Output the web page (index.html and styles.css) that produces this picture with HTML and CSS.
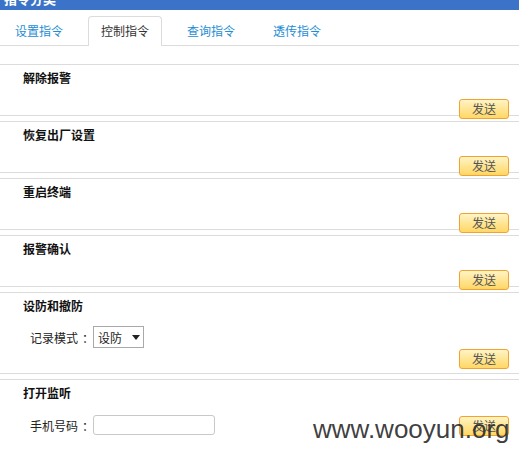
FILE: index.html
```html
<!DOCTYPE html>
<html lang="zh-CN">
<head>
<meta charset="utf-8">
<title>指令分类</title>
<link rel="stylesheet" href="styles.css">
</head>
<body>
<div class="page">
  <div class="topbar"><span class="topbar-title">指令分类</span></div>
  <ul class="tabs">
    <li class="tab">设置指令</li>
    <li class="tab active">控制指令</li>
    <li class="tab">查询指令</li>
    <li class="tab">透传指令</li>
  </ul>
  <div class="sections">
    <div class="section">
      <div class="sec-title">解除报警</div>
      <div class="btn-row"><button class="send">发送</button></div>
    </div>
    <div class="section">
      <div class="sec-title">恢复出厂设置</div>
      <div class="btn-row"><button class="send">发送</button></div>
    </div>
    <div class="section">
      <div class="sec-title">重启终端</div>
      <div class="btn-row"><button class="send">发送</button></div>
    </div>
    <div class="section">
      <div class="sec-title">报警确认</div>
      <div class="btn-row"><button class="send">发送</button></div>
    </div>
    <div class="section">
      <div class="sec-title">设防和撤防</div>
      <div class="form-row">
        <label class="lbl">记录模式<span class="colon">：</span></label>
        <span class="select-wrap">
          <select class="sel"><option>设防</option><option>撤防</option></select>
          <svg class="sel-arrow" width="8" height="5" viewBox="0 0 8 5"><path d="M0 0h8L4 5z" fill="#222"/></svg>
        </span>
      </div>
      <div class="btn-row btn-row-form"><button class="send">发送</button></div>
    </div>
    <div class="section section-last">
      <div class="sec-title">打开监听</div>
      <div class="form-row form-row-input">
        <label class="lbl">手机号码<span class="colon">：</span></label>
        <input class="txt" type="text">
        <button class="send send-inline">发送</button>
      </div>
    </div>
  </div>
  <div class="watermark">www.wooyun.org</div>
</div>
</body>
</html>
```
FILE: styles.css
```css
html, body {
  margin: 0;
  padding: 0;
  background: #fff;
}
body {
  font-family: "Noto Sans CJK SC", "Noto Sans", sans-serif;
  font-size: 12px;
  color: #333;
}
.page {
  position: relative;
  width: 519px;
  height: 459px;
  overflow: hidden;
}
.topbar {
  height: 10px;
  background: #3a73c7;
  overflow: hidden;
}
.topbar-title {
  display: block;
  margin-top: -9px;
  padding-left: 4px;
  line-height: 16px;
  font-size: 13px;
  font-weight: bold;
  color: #fff;
}
.tabs {
  list-style: none;
  margin: 0;
  padding: 6px 0 0 2px;
  display: flex;
  border-bottom: 1px solid #dcdcdc;
}
.tab {
  padding: 0 12px;
  line-height: 28px;
  height: 28px;
  border: 1px solid transparent;
  border-bottom: none;
  border-radius: 4px 4px 0 0;
  margin-right: 12px;
  margin-bottom: -1px;
  color: #1e8dd4;
  font-size: 12px;
  background: transparent;
}
.tab.active {
  color: #333;
  border-color: #dcdcdc;
  background: #fff;
  padding-bottom: 1px;
}
.sections {
  margin-top: 18px;
}
.section {
  border-top: 1px solid #dcdcdc;
  border-bottom: 1px solid #dcdcdc;
  margin-bottom: 5px;
}
.section-last {
  padding-bottom: 40px;
}
.sec-title {
  padding: 6px 0 0 23px;
  font-weight: bold;
  line-height: 14px;
  color: #111;
}
.btn-row {
  display: flex;
  justify-content: flex-end;
  padding-right: 10px;
  margin-top: 14px;
  margin-bottom: -4px;
}
.btn-row-form {
  margin-top: 1px;
  margin-bottom: 4px;
}
.send {
  width: 50px;
  height: 20px;
  padding: 0;
  border: 1px solid #f2a22e;
  border-radius: 3px;
  background: linear-gradient(#fff4c4, #ffd765);
  color: #555;
  font-family: "Noto Sans CJK SC", sans-serif;
  font-size: 12px;
  line-height: 18px;
  position: relative;
  z-index: 1;
}
.form-row {
  display: flex;
  align-items: center;
  padding-left: 30px;
  margin-top: 13px;
  height: 22px;
}
.form-row-input {
  margin-top: 15px;
  height: 20px;
  padding-right: 10px;
}
.lbl {
  width: 63px;
  color: #222;
  white-space: nowrap;
}
.colon {
  margin-left: 4px;
}
.select-wrap {
  position: relative;
  display: inline-block;
  width: 51px;
  height: 22px;
}
.sel {
  appearance: none;
  -webkit-appearance: none;
  width: 51px;
  height: 22px;
  margin: 0;
  padding: 0 0 0 4px;
  border: 1px solid #a9a9a9;
  border-radius: 0;
  background: #fff;
  font-family: "Noto Sans CJK SC", sans-serif;
  font-size: 12px;
  color: #222;
}
.sel-arrow {
  position: absolute;
  left: 39px;
  top: 9px;
  pointer-events: none;
}
.txt {
  width: 122px;
  height: 20px;
  box-sizing: border-box;
  margin: 0;
  border: 1px solid #c8c8c8;
  border-radius: 3px;
  padding: 0 4px;
}
.send-inline {
  margin-left: auto;
  margin-top: 2px;
}
.watermark {
  position: absolute;
  left: 313px;
  top: 416px;
  font-family: "Liberation Sans", Arial, sans-serif;
  font-size: 26px;
  line-height: 26px;
  color: rgba(45, 45, 45, 0.92);
  z-index: 2;
  white-space: nowrap;
}
```
